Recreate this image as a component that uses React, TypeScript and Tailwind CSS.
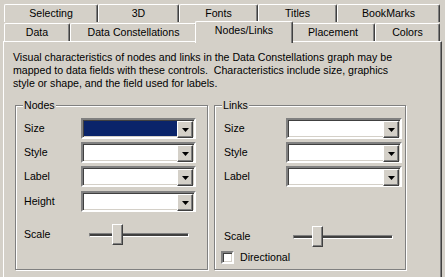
import React from 'react';

const raised =
  'bg-[#d4d0c8] border-t border-l border-t-white border-l-white border-b border-r border-b-[#404040] border-r-[#404040] shadow-[inset_-1px_-1px_#808080]';

function Tab({ label, w, selected }: { label: string; w: string; selected?: boolean }) {
  if (selected) {
    return (
      <div
        className={`${w} relative z-10 -mx-[2px] -mt-[2px] h-[22px] shrink-0 rounded-t-[2px] border-l border-t border-l-white border-t-white border-r border-r-[#404040] bg-[#d4d0c8] pt-[2px] text-center shadow-[inset_-1px_0_#808080]`}
      >
        {label}
      </div>
    );
  }
  return (
    <div
      className={`${w} shrink-0 rounded-t-[2px] border-l border-t border-l-white border-t-white border-r border-r-[#404040] pt-[2px] text-center shadow-[inset_-1px_0_#808080]`}
    >
      {label}
    </div>
  );
}

function Combo({ w, filled }: { w: string; filled?: boolean }) {
  return (
    <div
      className={`${w} flex h-[21px] border-2 border-t-[#808080] border-l-[#808080] border-b-white border-r-white shadow-[inset_1px_1px_#404040,inset_-1px_-1px_#d4d0c8] p-[1px]`}
    >
      <div className={`flex-1 ${filled ? 'bg-[#0a246a]' : 'bg-white'}`} />
      <div className={`${raised} flex h-[17px] w-[16px] items-center justify-center`}>
        <svg width="7" height="4" viewBox="0 0 7 4">
          <path d="M0 0h7L3.5 4z" fill="#000" />
        </svg>
      </div>
    </div>
  );
}

function Slider({ thumb }: { thumb: string }) {
  return (
    <div className="relative flex h-[21px] w-[100px] items-center">
      <div className="h-[4px] w-full border border-t-[#808080] border-l-[#808080] border-b-white border-r-white bg-[#404040]" />
      <div className={`${raised} absolute top-0 ${thumb} h-[21px] w-[11px]`} />
    </div>
  );
}

function Row({ label, labelW, children }: { label: string; labelW: string; children: React.ReactNode }) {
  return (
    <div className="flex items-center">
      <span className={`${labelW} shrink-0`}>{label}</span>
      {children}
    </div>
  );
}

function Group({ title, w, children }: { title: string; w: string; children: React.ReactNode }) {
  return (
    <fieldset
      className={`${w} h-[171px] border border-[#808080] shadow-[inset_1px_1px_#fff,1px_1px_#fff]`}
    >
      <legend className="ml-[7px] bg-[#d4d0c8] px-[1px] leading-[13px]">{title}</legend>
      {children}
    </fieldset>
  );
}

export default function App() {
  return (
    <div className="h-[277px] w-[445px] overflow-hidden bg-[#d4d0c8] font-['Liberation_Sans',Arial,sans-serif] text-[10.6px] leading-[13px] text-black">
      <div className="pl-[4px] pt-[4px]">
        <div className="flex h-[18px]">
          <Tab label="Selecting" w="w-[94px]" />
          <Tab label="3D" w="w-[81px]" />
          <Tab label="Fonts" w="w-[79px]" />
          <Tab label="Titles" w="w-[79px]" />
          <Tab label="BookMarks" w="w-[103px]" />
        </div>
        <div className="flex h-[19px] pt-[1px]">
          <Tab label="Data" w="w-[66px]" />
          <Tab label="Data Constellations" w="w-[127px]" />
          <Tab label="Nodes/Links" w="w-[98px]" selected />
          <Tab label="Placement" w="w-[84px]" />
          <Tab label="Colors" w="w-[65px]" />
        </div>
      </div>
      <div className="ml-[3px] h-[240px] w-[439px] border-l border-t border-l-white border-t-white border-r border-r-[#404040] shadow-[inset_-1px_0_#808080]">
        <p className="pl-[9px] pt-[9px]">
          Visual characteristics of nodes and links in the Data Constellations graph may be
          <br />
          mapped to data fields with these controls.{'\u00a0'} Characteristics include size, graphics
          <br />
          style or shape, and the field used for labels.
        </p>
        <div className="ml-[11px] mt-[9px] flex gap-[6px]">
          <Group title="Nodes" w="w-[193px]">
            <div className="flex flex-col gap-[3px] pl-[8px] pt-[6px]">
              <Row label="Size" labelW="w-[57px]">
                <Combo w="w-[115px]" filled />
              </Row>
              <Row label="Style" labelW="w-[57px]">
                <Combo w="w-[115px]" />
              </Row>
              <Row label="Label" labelW="w-[57px]">
                <Combo w="w-[115px]" />
              </Row>
              <div className="mt-[1px]">
                <Row label="Height" labelW="w-[57px]">
                  <Combo w="w-[115px]" />
                </Row>
              </div>
              <div className="mt-[9px]">
                <Row label="Scale" labelW="w-[65px]">
                  <Slider thumb="left-[23px]" />
                </Row>
              </div>
            </div>
          </Group>
          <Group title="Links" w="w-[192px]">
            <div className="flex flex-col gap-[3px] pl-[9px] pt-[6px]">
              <Row label="Size" labelW="w-[62px]">
                <Combo w="w-[116px]" />
              </Row>
              <Row label="Style" labelW="w-[62px]">
                <Combo w="w-[116px]" />
              </Row>
              <Row label="Label" labelW="w-[62px]">
                <Combo w="w-[116px]" />
              </Row>
              <div className="mt-[36px]">
                <Row label="Scale" labelW="w-[69px]">
                  <Slider thumb="left-[19px]" />
                </Row>
              </div>
              <div className="-ml-[3px] mt-[1px] flex items-center gap-[6px]">
                <div className="h-[13px] w-[13px] border-2 border-t-[#808080] border-l-[#808080] border-b-white border-r-white bg-white shadow-[inset_1px_1px_#404040,inset_-1px_-1px_#d4d0c8]" />
                <span>Directional</span>
              </div>
            </div>
          </Group>
        </div>
      </div>
    </div>
  );
}
